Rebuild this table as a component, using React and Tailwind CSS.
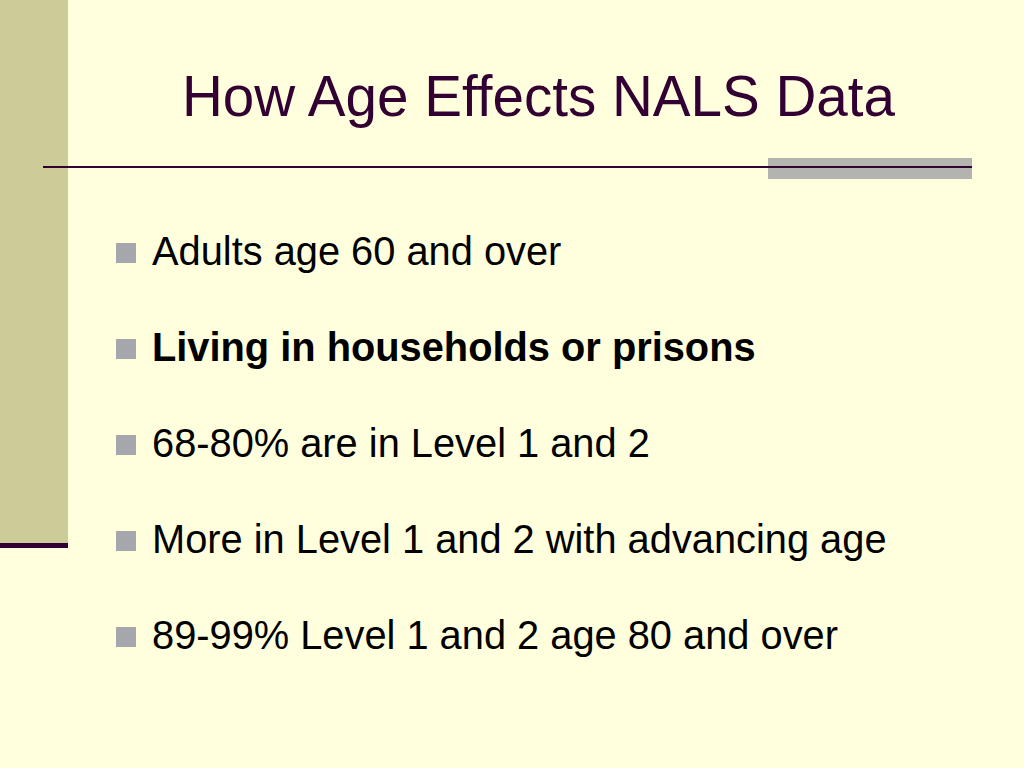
import React from 'react';

const BULLETS = [
  { text: 'Adults age 60 and over' },
  { text: 'Living in households or prisons', bold: true },
  { text: '68-80% are in Level 1 and 2' },
  { text: 'More in Level 1 and 2 with advancing age' },
  { text: '89-99% Level 1 and 2 age 80 and over' },
];

export default function App() {
  return (
    <div
      className="flex w-[1024px] h-[768px] overflow-hidden bg-[#ffffdd]"
      style={{ fontFamily: '"Liberation Sans", Arial, sans-serif' }}
    >
      {/* left band */}
      <div className="w-[68px] shrink-0 flex flex-col">
        <div className="h-[543px] bg-[#cccc99]" />
        <div className="h-[5px] bg-[#330033]" />
      </div>

      <div className="flex-1 flex flex-col">
        <div className="h-[158px] pt-[69px] pl-[114px]">
          <h1 className="text-[56.6px] leading-none text-[#330033] whitespace-nowrap">
            How Age Effects NALS Data
          </h1>
        </div>

        {/* rule with grey block */}
        <div className="grid h-[21px]">
          <div className="col-start-1 row-start-1 justify-self-end w-[204px] h-[21px] mr-[52px] bg-[#b3b3b0]" />
          <div className="col-start-1 row-start-1 self-center h-[2px] ml-[-25px] mr-[52px] mt-[-3px] bg-[#330033]" />
        </div>

        <ul className="mt-[24px] pl-[48px]">
          {BULLETS.map((b) => (
            <li key={b.text} className="flex h-[96px] leading-[96px] text-[39.8px] text-black">
              <span className="w-[20px] h-[20px] mt-[40px] mr-[16px] shrink-0 bg-[#a6a6ad]" />
              <span className={b.bold ? 'font-bold whitespace-nowrap' : 'whitespace-nowrap'}>{b.text}</span>
            </li>
          ))}
        </ul>
      </div>
    </div>
  );
}
